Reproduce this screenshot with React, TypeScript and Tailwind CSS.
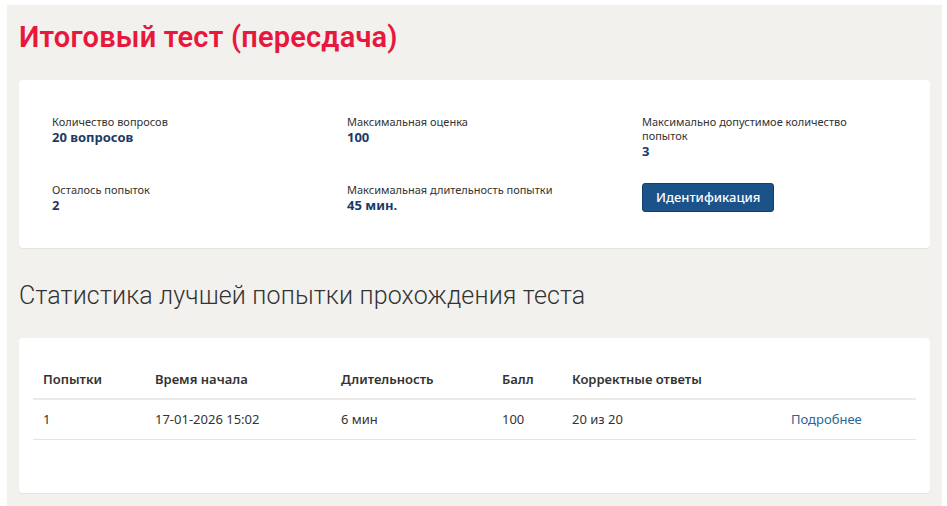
import React from 'react';

const infoItems = [
  { label: 'Количество вопросов', value: '20 вопросов' },
  { label: 'Максимальная оценка', value: '100' },
  { label: 'Максимально допустимое количество попыток', value: '3' },
  { label: 'Осталось попыток', value: '2' },
  { label: 'Максимальная длительность попытки', value: '45 мин.' },
];

const App = () => {
  return (
    <div className="h-[506px] bg-white pl-[7px] pr-[5px] pt-[5px] font-['Noto_Sans',sans-serif] text-[#333]">
      <div className="h-full bg-[#f2f1ee] px-3 pt-[15px]">
        <h1 className="text-[29px] font-semibold leading-[34px] text-[#e8173c] font-['Roboto',sans-serif] tracking-[0.2px]">
          Итоговый тест (пересдача)
        </h1>

        {/* Info card */}
        <div className="mt-[26px] h-[168px] rounded bg-white px-[33px] pt-[35px] shadow-[0_1px_1px_rgba(0,0,0,0.06)]">
          <div className="grid grid-cols-[295px_295px_1fr]">
            {infoItems.slice(0, 3).map((item) => (
              <div key={item.label} className="w-[212px]">
                <div className="text-[11px] leading-[14px]">{item.label}</div>
                <div className="text-[13px] font-bold leading-[16px] text-[#1b3a66]">{item.value}</div>
              </div>
            ))}
          </div>
          <div className="mt-[24px] grid grid-cols-[295px_295px_1fr]">
            {infoItems.slice(3).map((item) => (
              <div key={item.label}>
                <div className="text-[11px] leading-[14px]">{item.label}</div>
                <div className="text-[13px] font-bold leading-[16px] text-[#1b3a66]">{item.value}</div>
              </div>
            ))}
            <div>
              <button className="h-[29px] rounded-[3px] border border-[#133f6b] bg-[#1a5289] px-[13px] text-[13px] font-medium text-white">
                Идентификация
              </button>
            </div>
          </div>
        </div>

        <h2 className="mt-[33px] text-[25px] font-light leading-[30px] tracking-[0.15px] text-[#333] font-['Roboto',sans-serif]">
          Статистика лучшей попытки прохождения теста
        </h2>

        {/* Stats card */}
        <div className="mt-[27px] h-[155px] rounded bg-white px-[14px] pt-[24px] shadow-[0_1px_1px_rgba(0,0,0,0.06)]">
          <table className="w-full border-collapse text-[13px]">
            <thead>
              <tr className="border-b-2 border-[#eceae6] text-left">
                <th className="w-[122px] py-[8px] pl-[10px] font-semibold">Попытки</th>
                <th className="w-[186px] py-[8px] font-semibold">Время начала</th>
                <th className="w-[161px] py-[8px] font-semibold">Длительность</th>
                <th className="w-[70px] py-[8px] font-semibold">Балл</th>
                <th className="w-[219px] py-[8px] font-semibold">Корректные ответы</th>
                <th className="py-[8px]"></th>
              </tr>
            </thead>
            <tbody>
              <tr className="border-b border-[#e6e4e0]">
                <td className="py-[10px] pl-[10px]">1</td>
                <td className="py-[10px]">17-01-2026 15:02</td>
                <td className="py-[10px]">6 мин</td>
                <td className="py-[10px]">100</td>
                <td className="py-[10px]">20 из 20</td>
                <td className="py-[10px]">
                  <a href="#" className="text-[#2a6496]">Подробнее</a>
                </td>
              </tr>
            </tbody>
          </table>
        </div>
      </div>
    </div>
  );
};

export default App;
